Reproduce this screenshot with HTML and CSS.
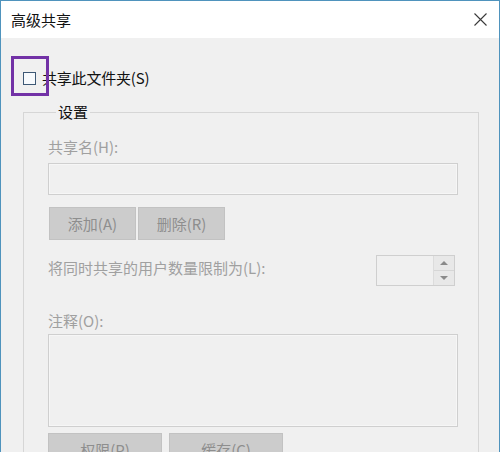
FILE: index.html
```html
<!DOCTYPE html>
<html lang="zh-CN">
<head>
<meta charset="utf-8">
<title>高级共享</title>
<link rel="stylesheet" href="styles.css">
</head>
<body>
<div class="window">
  <div class="titlebar">
    <span class="title">高级共享</span>
    <svg class="close" width="13" height="13" viewBox="0 0 13 13" aria-hidden="true">
      <path d="M0.5 0.5 L12.5 12.5 M12.5 0.5 L0.5 12.5" stroke="#3a3a3a" stroke-width="1.1" fill="none"/>
    </svg>
  </div>
  <div class="content">
    <label class="check-row">
      <span class="checkbox"></span>
      <span class="check-label">共享此文件夹(S)</span>
    </label>
    <div class="group">
      <div class="group-title">设置</div>
      <div class="label first">共享名(H):</div>
      <div class="input"></div>
      <div class="btn-row">
        <div class="btn small">添加(A)</div>
        <div class="btn small">删除(R)</div>
      </div>
      <div class="limit-row">
        <span class="label">将同时共享的用户数量限制为(L):</span>
        <div class="spinner">
          <div class="spin-field"></div>
          <div class="spin-buttons">
            <div class="spin-btn"><span class="tri up"></span></div>
            <div class="spin-btn"><span class="tri down"></span></div>
          </div>
        </div>
      </div>
      <div class="label comment">注释(O):</div>
      <div class="textarea"></div>
      <div class="btn-row wide">
        <div class="btn large">权限(P)</div>
        <div class="btn large">缓存(C)</div>
      </div>
    </div>
  </div>
  <div class="highlight"></div>
</div>
</body>
</html>
```

FILE: styles.css
```css
html, body {
  margin: 0;
  padding: 0;
  background: #f0f0f0;
}

body {
  font-family: "Noto Sans CJK SC", "Noto Sans", sans-serif;
  font-size: 15px;
  line-height: 20px;
}

.window {
  position: relative;
  width: 500px;
  height: 452px;
  box-sizing: border-box;
  border: 1px solid #4f93bd;
  border-bottom: none;
  background: #f0f0f0;
  overflow: hidden;
}

.titlebar {
  height: 37px;
  background: #ffffff;
  display: flex;
  align-items: center;
  justify-content: space-between;
  padding: 0 12px 0 10px;
}

.title {
  color: #111;
  font-size: 15px;
}

.close {
  display: block;
}

.content {
  padding: 30px 20px 0 22px;
}

.check-row {
  display: flex;
  align-items: center;
  height: 20px;
}

.checkbox {
  width: 13px;
  height: 13px;
  box-sizing: border-box;
  border: 1px solid #3d5875;
  background: #f7fafd;
  margin-right: 6px;
}

.check-label {
  color: #111;
  letter-spacing: -0.2px;
}

.group {
  margin-top: 24px;
  border: 1px solid #d6d6d6;
  border-bottom: none;
  padding: 0 20px 0 24px;
  height: 400px;
}

.group-title {
  width: fit-content;
  margin: -11px 0 0 8px;
  padding: 0 2px;
  background: #f0f0f0;
  color: #111;
}

.label {
  color: #a0a0a0;
}

.label.first {
  margin-top: 15px;
}

.input {
  margin-top: 6px;
  height: 32px;
  box-sizing: border-box;
  border: 1px solid #cfcfcf;
  box-shadow: inset 0 0 0 1px #f6f6f6;
}

.btn-row {
  display: flex;
  gap: 2px;
  margin-top: 12px;
  padding-left: 1px;
}

.btn {
  box-sizing: border-box;
  height: 33px;
  background: #cccccc;
  border: 1px solid #c2c2c2;
  color: #8e8e8e;
  display: flex;
  align-items: center;
  justify-content: center;
}

.btn.small {
  width: 87px;
}

.btn-row.wide {
  margin-top: 6px;
  gap: 7px;
  padding-left: 0;
}

.btn.large {
  width: 114px;
}

.limit-row {
  display: flex;
  align-items: center;
  justify-content: space-between;
  margin-top: 15px;
}

.limit-row .label {
  margin-top: -5px;
}

.spinner {
  display: flex;
  width: 79px;
  height: 31px;
  box-sizing: border-box;
  border: 1px solid #cfcfcf;
  margin-right: 3px;
}

.spin-field {
  flex: 1;
  border-right: 1px solid #dcdcdc;
}

.spin-buttons {
  width: 20px;
  display: flex;
  flex-direction: column;
  background: #e8e8e8;
}

.spin-btn {
  flex: 1;
  display: flex;
  align-items: center;
  justify-content: center;
}

.spin-btn + .spin-btn {
  border-top: 1px solid #d6d6d6;
}

.tri {
  width: 0;
  height: 0;
  border-left: 4px solid transparent;
  border-right: 4px solid transparent;
}

.tri.up {
  border-bottom: 4px solid #8a8a8a;
}

.tri.down {
  border-top: 4px solid #8a8a8a;
}

.label.comment {
  margin-top: 25px;
}

.textarea {
  margin-top: 3px;
  height: 93px;
  box-sizing: border-box;
  border: 1px solid #cfcfcf;
  box-shadow: inset 0 0 0 1px #f6f6f6;
}

.highlight {
  position: absolute;
  left: 10px;
  top: 55px;
  width: 38px;
  height: 40px;
  box-sizing: border-box;
  border: 3px solid #7232a6;
}
```
